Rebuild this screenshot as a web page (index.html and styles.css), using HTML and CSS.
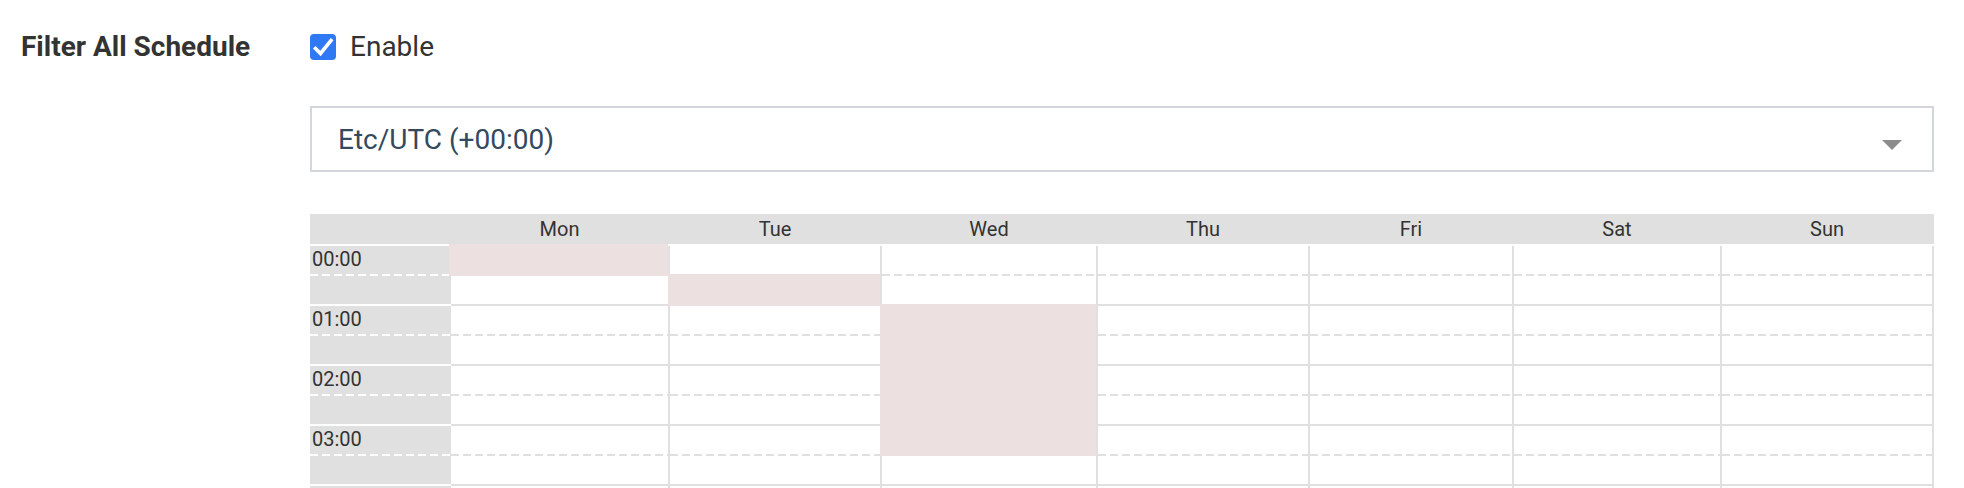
FILE: index.html
```html
<!DOCTYPE html>
<html lang="en">
<head>
<meta charset="utf-8">
<title>Filter All Schedule</title>
<link rel="stylesheet" href="styles.css">
</head>
<body>
<div class="form">
  <div class="form-row">
    <div class="form-label">Filter All Schedule</div>
    <div class="form-field">
      <label class="check">
        <span class="check-box">
          <svg width="26" height="26" viewBox="0 0 26 26"><path d="M5.5 14.5 L10.5 19.5 L21 6.5" fill="none" stroke="#fff" stroke-width="3.6" stroke-linecap="square" stroke-linejoin="miter"/></svg>
        </span>
        <span class="check-text">Enable</span>
      </label>

      <div class="select">
        <span class="select-value">Etc/UTC (+00:00)</span>
        <svg class="select-arrow" width="20" height="10" viewBox="0 0 20 10"><path d="M0 0 H20 L10 10 Z" fill="#8c8c8c"/></svg>
      </div>

      <div class="schedule">
        <div class="sched-head">
          <div></div>
          <div class="day">Mon</div>
          <div class="day">Tue</div>
          <div class="day">Wed</div>
          <div class="day">Thu</div>
          <div class="day">Fri</div>
          <div class="day">Sat</div>
          <div class="day">Sun</div>
        </div>
        <div class="sched-body">
          <!-- 00:00 -->
          <div class="t dash"><span>00:00</span></div>
          <div class="c dash host"><div class="ev ev-1"></div></div>
          <div class="c dash"></div><div class="c dash"></div><div class="c dash"></div><div class="c dash"></div><div class="c dash"></div><div class="c dash"></div>
          <!-- 00:30 -->
          <div class="t"></div>
          <div class="c"></div>
          <div class="c host"><div class="ev ev-1"></div></div>
          <div class="c"></div><div class="c"></div><div class="c"></div><div class="c"></div><div class="c"></div>
          <!-- 01:00 -->
          <div class="t dash"><span>01:00</span></div>
          <div class="c dash"></div><div class="c dash"></div>
          <div class="c dash host"><div class="ev ev-5"></div></div>
          <div class="c dash"></div><div class="c dash"></div><div class="c dash"></div><div class="c dash"></div>
          <!-- 01:30 -->
          <div class="t"></div>
          <div class="c"></div><div class="c"></div><div class="c"></div><div class="c"></div><div class="c"></div><div class="c"></div><div class="c"></div>
          <!-- 02:00 -->
          <div class="t dash"><span>02:00</span></div>
          <div class="c dash"></div><div class="c dash"></div><div class="c dash"></div><div class="c dash"></div><div class="c dash"></div><div class="c dash"></div><div class="c dash"></div>
          <!-- 02:30 -->
          <div class="t"></div>
          <div class="c"></div><div class="c"></div><div class="c"></div><div class="c"></div><div class="c"></div><div class="c"></div><div class="c"></div>
          <!-- 03:00 -->
          <div class="t dash"><span>03:00</span></div>
          <div class="c dash"></div><div class="c dash"></div><div class="c dash"></div><div class="c dash"></div><div class="c dash"></div><div class="c dash"></div><div class="c dash"></div>
          <!-- 03:30 -->
          <div class="t"></div>
          <div class="c"></div><div class="c"></div><div class="c"></div><div class="c"></div><div class="c"></div><div class="c"></div><div class="c"></div>
          <!-- 04:00 -->
          <div class="t dash"></div>
          <div class="c dash"></div><div class="c dash"></div><div class="c dash"></div><div class="c dash"></div><div class="c dash"></div><div class="c dash"></div><div class="c dash"></div>
        </div>
      </div>
    </div>
  </div>
</div>
</body>
</html>
```

FILE: styles.css
```css
* {
  box-sizing: border-box;
}

html, body {
  margin: 0;
  padding: 0;
  background: #ffffff;
}

body {
  font-family: Roboto, "Liberation Sans", Arial, sans-serif;
  color: #333333;
}

.form {
  padding: 30px 30px 0 21px;
}

.form-row {
  display: flex;
  align-items: flex-start;
}

.form-label {
  width: 289px;
  flex: none;
  font-size: 28px;
  line-height: 33px;
  font-weight: 700;
  color: #333333;
}

.form-field {
  flex: 1;
  min-width: 0;
}

.check {
  display: flex;
  align-items: center;
  gap: 14px;
  height: 33px;
}

.check-box {
  width: 26px;
  height: 26px;
  border-radius: 4px;
  background: #3079f4;
  display: flex;
}

.check-text {
  font-size: 28px;
  line-height: 33px;
  color: #333333;
}

.select {
  margin-top: 43px;
  height: 66px;
  border: 2px solid #d3d7dc;
  display: flex;
  align-items: center;
  padding: 0 30px 0 26px;
}

.select-value {
  flex: 1;
  font-size: 28px;
  color: #34495e;
}

.select-arrow {
  margin-top: 12px;
  flex: none;
}

.schedule {
  margin-top: 42px;
}

.sched-head,
.sched-body {
  display: grid;
  grid-template-columns: 141px 219px 212px 216px 212px 204px 208px 212px;
}

.sched-head {
  background: #e0e0e0;
  height: 30px;
}

.sched-head .day {
  font-size: 20px;
  line-height: 30px;
  text-align: center;
  padding-right: 2px;
  color: #333333;
}

.sched-body {
  grid-auto-rows: 30px;
  border-top: 2px solid #ffffff;
}

.t {
  background-color: #e0e0e0;
  border-bottom: 2px solid #ffffff;
  padding: 2px 0 0 2px;
  font-size: 20px;
  line-height: 23px;
  color: #333333;
}

.c {
  background-color: #ffffff;
  border-right: 2px solid #e0e0e0;
  border-bottom: 2px solid #e0e0e0;
}

.t.dash {
  border-bottom: none;
  background-image: repeating-linear-gradient(to right, #ffffff 0 8px, transparent 8px 12px);
  background-size: 100% 2px;
  background-position: left bottom;
  background-repeat: no-repeat;
}

.c.dash {
  border-bottom: none;
  background-image: repeating-linear-gradient(to right, #e0e0e0 0 8px, transparent 8px 12px);
  background-size: 100% 2px;
  background-position: left bottom;
  background-repeat: no-repeat;
}

.host {
  position: relative;
}

.ev {
  position: absolute;
  left: -2px;
  right: 0;
  top: -2px;
  background: #ede0e0;
}

.ev-1 {
  height: 32px;
}

.ev-5 {
  height: 152px;
}
```
